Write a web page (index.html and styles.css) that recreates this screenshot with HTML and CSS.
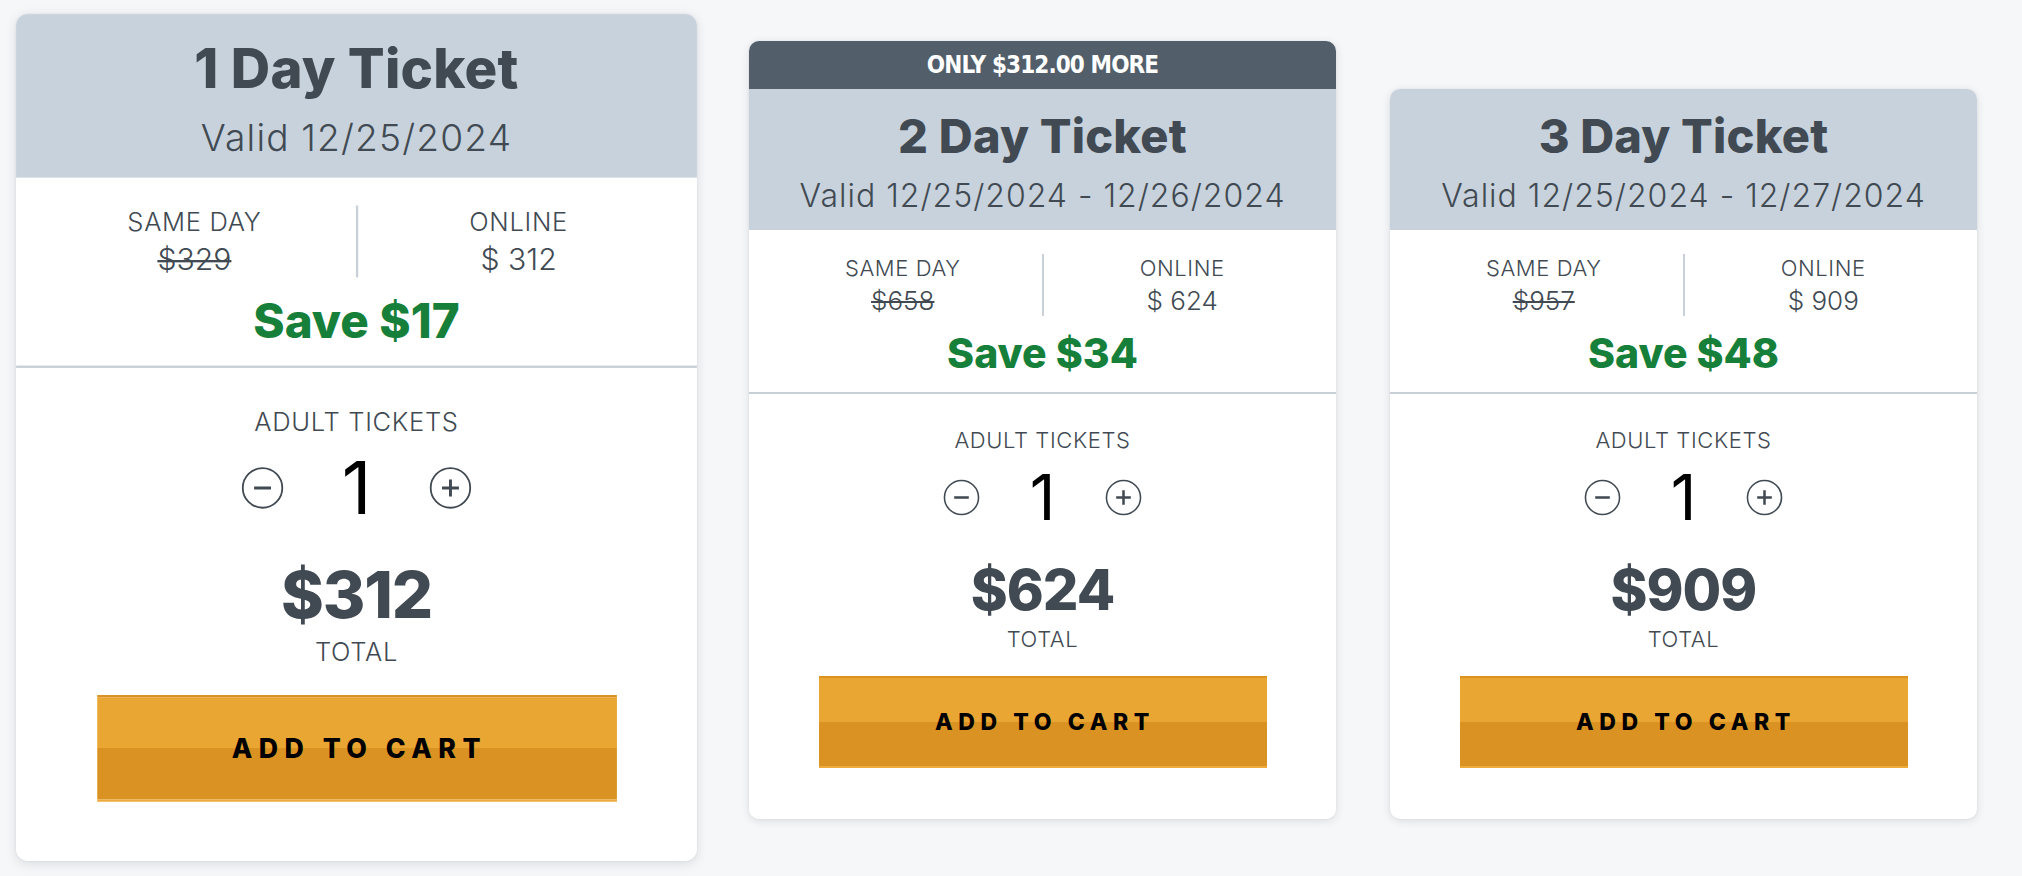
FILE: index.html
```html
<!DOCTYPE html>
<html lang="en">
<head>
<meta charset="utf-8">
<title>Tickets</title>
<link rel="stylesheet" href="styles.css">
</head>
<body>
<main class="tickets">
  <section class="card card--featured">
    <header class="card-head">
      <h2 class="title">1 Day Ticket</h2>
      <p class="valid">Valid 12/25/2024</p>
    </header>
    <div class="pricing">
      <div class="cols">
        <div class="col">
          <div class="label">SAME DAY</div>
          <div class="price"><s>$329</s></div>
        </div>
        <div class="divider"></div>
        <div class="col">
          <div class="label">ONLINE</div>
          <div class="price">$ 312</div>
        </div>
      </div>
      <div class="save">Save $17</div>
    </div>
    <div class="order">
      <div class="label">ADULT TICKETS</div>
      <div class="qty-row">
        <button class="qbtn" aria-label="decrease"><svg viewBox="0 0 38 38" width="37" height="37"><circle cx="19" cy="19" r="17.5" fill="none" stroke="#414a52" stroke-width="1.6"/><path d="M11.5 19h15" stroke="#414a52" stroke-width="2.6"/></svg></button>
        <span class="qty">1</span>
        <button class="qbtn" aria-label="increase"><svg viewBox="0 0 38 38" width="37" height="37"><circle cx="19" cy="19" r="17.5" fill="none" stroke="#414a52" stroke-width="1.6"/><path d="M11.5 19h15M19 11.5v15" stroke="#414a52" stroke-width="2.6"/></svg></button>
      </div>
      <div class="total">$312</div>
      <div class="label total-label">TOTAL</div>
      <button class="cart">ADD TO CART</button>
    </div>
  </section>

  <div class="card-wrap">
    <div class="badge">ONLY $312.00 MORE</div>
    <section class="card card--badged">
      <header class="card-head">
        <h2 class="title">2 Day Ticket</h2>
        <p class="valid">Valid 12/25/2024 - 12/26/2024</p>
      </header>
      <div class="pricing">
        <div class="cols">
          <div class="col">
            <div class="label">SAME DAY</div>
            <div class="price"><s>$658</s></div>
          </div>
          <div class="divider"></div>
          <div class="col">
            <div class="label">ONLINE</div>
            <div class="price">$ 624</div>
          </div>
        </div>
        <div class="save">Save $34</div>
      </div>
      <div class="order">
        <div class="label">ADULT TICKETS</div>
        <div class="qty-row">
          <button class="qbtn" aria-label="decrease"><svg viewBox="0 0 38 38" width="37" height="37"><circle cx="19" cy="19" r="17.5" fill="none" stroke="#414a52" stroke-width="1.6"/><path d="M11.5 19h15" stroke="#414a52" stroke-width="2.6"/></svg></button>
          <span class="qty">1</span>
          <button class="qbtn" aria-label="increase"><svg viewBox="0 0 38 38" width="37" height="37"><circle cx="19" cy="19" r="17.5" fill="none" stroke="#414a52" stroke-width="1.6"/><path d="M11.5 19h15M19 11.5v15" stroke="#414a52" stroke-width="2.6"/></svg></button>
        </div>
        <div class="total">$624</div>
        <div class="label total-label">TOTAL</div>
        <button class="cart">ADD TO CART</button>
      </div>
    </section>
  </div>

  <section class="card">
    <header class="card-head">
      <h2 class="title">3 Day Ticket</h2>
      <p class="valid">Valid 12/25/2024 - 12/27/2024</p>
    </header>
    <div class="pricing">
      <div class="cols">
        <div class="col">
          <div class="label">SAME DAY</div>
          <div class="price"><s>$957</s></div>
        </div>
        <div class="divider"></div>
        <div class="col">
          <div class="label">ONLINE</div>
          <div class="price">$ 909</div>
        </div>
      </div>
      <div class="save">Save $48</div>
    </div>
    <div class="order">
      <div class="label">ADULT TICKETS</div>
      <div class="qty-row">
        <button class="qbtn" aria-label="decrease"><svg viewBox="0 0 38 38" width="37" height="37"><circle cx="19" cy="19" r="17.5" fill="none" stroke="#414a52" stroke-width="1.6"/><path d="M11.5 19h15" stroke="#414a52" stroke-width="2.6"/></svg></button>
        <span class="qty">1</span>
        <button class="qbtn" aria-label="increase"><svg viewBox="0 0 38 38" width="37" height="37"><circle cx="19" cy="19" r="17.5" fill="none" stroke="#414a52" stroke-width="1.6"/><path d="M11.5 19h15M19 11.5v15" stroke="#414a52" stroke-width="2.6"/></svg></button>
      </div>
      <div class="total">$909</div>
      <div class="label total-label">TOTAL</div>
      <button class="cart">ADD TO CART</button>
    </div>
  </section>
</main>
</body>
</html>
```

FILE: styles.css
```css
* { box-sizing: border-box; }

html, body {
  margin: 0;
  padding: 0;
}

body {
  width: 2022px;
  height: 876px;
  overflow: hidden;
  background: #f6f7f9;
  font-family: Inter, "Noto Sans", sans-serif;
  color: #414a52;
}

.tickets {
  display: flex;
  align-items: flex-end;
  padding: 41px 0 0 63px;
}

.card {
  width: 587px;
  height: 730px;
  background: #ffffff;
  border-radius: 10px;
  overflow: hidden;
  box-shadow: 0 2px 9px rgba(40, 50, 60, 0.13), 0 0 2px rgba(40, 50, 60, 0.08);
  display: flex;
  flex-direction: column;
}

.card--featured {
  margin-right: 99px;
  transform: translateY(-16.5px) scale(1.16);
}

.card-wrap {
  width: 587px;
  margin-right: 54px;
  border-radius: 10px;
  box-shadow: 0 2px 9px rgba(40, 50, 60, 0.13), 0 0 2px rgba(40, 50, 60, 0.08);
}

.card--badged {
  border-radius: 0 0 10px 10px;
  box-shadow: none;
}

.badge {
  height: 48px;
  background: #525f6b;
  border-radius: 10px 10px 0 0;
  color: #ffffff;
  font-family: "DejaVu Sans Condensed", "DejaVu Sans", sans-serif;
  font-stretch: condensed;
  font-weight: 700;
  font-size: 24px;
  line-height: 48px;
  letter-spacing: -0.9px;
  text-align: center;
}

.card-head {
  background: #c8d2dc;
  height: 141px;
  padding-top: 19px;
  text-align: center;
}

.title {
  margin: 0;
  font-size: 47px;
  line-height: 56px;
  font-weight: 800;
  letter-spacing: 0.2px;
  color: #414a52;
}

.valid {
  margin: 12px 0 0;
  font-size: 32px;
  line-height: 40px;
  font-weight: 300;
  letter-spacing: 1px;
  color: #414a52;
}

.pricing {
  padding: 24px 15px 15px;
  border-bottom: 2px solid #c9cfd6;
  text-align: center;
}

.cols {
  display: flex;
  align-items: stretch;
}

.col {
  flex: 1;
  text-align: center;
}

.divider {
  width: 2px;
  background: #c9d0d8;
}

.label {
  font-size: 22px;
  line-height: 28px;
  font-weight: 300;
  letter-spacing: 0.6px;
  color: #414a52;
}

.price {
  margin-top: 3px;
  font-size: 26px;
  line-height: 31px;
  font-weight: 300;
  color: #414a52;
}

.price s {
  text-decoration-thickness: 2px;
}

.save {
  margin-top: 13px;
  font-size: 41px;
  line-height: 48px;
  font-weight: 800;
  color: #16803a;
}

.order {
  padding-top: 32px;
  display: flex;
  flex-direction: column;
  align-items: center;
}

.qty-row {
  margin-top: 11px;
  display: flex;
  align-items: center;
}

.qbtn {
  width: 37px;
  height: 37px;
  padding: 0;
  border: 0;
  background: none;
  display: flex;
}

.qty {
  width: 125px;
  text-align: center;
  font-size: 63px;
  line-height: 64px;
  font-weight: 400;
  color: #000000;
}

.total {
  margin-top: 31px;
  font-size: 56px;
  line-height: 60px;
  font-weight: 800;
  letter-spacing: -1px;
  color: #414a52;
}

.total-label {
  margin-top: 5px;
}

.cart {
  margin-top: 23px;
  width: 448px;
  height: 92px;
  border: 0;
  border-top: 2px solid #db9222;
  border-bottom: 2px solid #eeab3d;
  background: linear-gradient(to bottom, #e9a633 0%, #e9a633 50%, #da9323 50%, #da9323 100%);
  font-family: Inter, "Noto Sans", sans-serif;
  font-size: 23px;
  font-weight: 800;
  letter-spacing: 5.6px;
  color: #000000;
  padding: 0 0 0 5px;
}
```
